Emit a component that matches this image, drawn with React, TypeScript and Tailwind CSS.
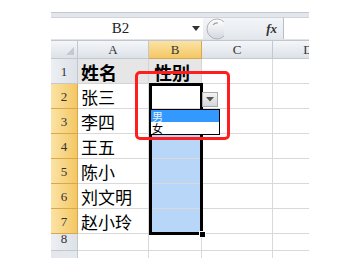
import React from 'react';

const cjk = { fontFamily: '"Noto Sans CJK SC", "Noto Sans", sans-serif' };
const serif = { fontFamily: '"Liberation Serif", "DejaVu Serif", serif' };

const names = ['张三', '李四', '王五', '陈小', '刘文明', '赵小玲'];

const HeaderCell: React.FC<{ label: string; w: string; active?: boolean }> = ({ label, w, active }) => (
  <div
    className={`${w} shrink-0 h-full flex items-center justify-center border-r border-b text-[13px] text-[#333] ${
      active
        ? 'bg-linear-to-b from-[#fbe3a4] to-[#f4c763] border-[#d9a84a]'
        : 'bg-linear-to-b from-[#f4f6f9] to-[#dde2e8] border-[#c3c8cf]'
    }`}
    style={serif}
  >
    {label}
  </div>
);

const RowHead: React.FC<{ n: number; active?: boolean; h: string }> = ({ n, active, h }) => (
  <div
    className={`w-[27px] shrink-0 ${h} flex items-end justify-center pb-[2px] border-r border-b text-[13px] text-[#333] ${
      active
        ? 'bg-linear-to-r from-[#fbe3a4] to-[#f4c763] border-[#d9a84a]'
        : 'bg-linear-to-r from-[#eceff3] to-[#dde2e8] border-[#c3c8cf]'
    }`}
    style={serif}
  >
    {n}
  </div>
);

// plain cells for columns C and D
const Rest: React.FC = () => (
  <>
    <div className="w-[71px] shrink-0 h-full border-r border-b border-[#d9d9d9]" />
    <div className="w-[71px] shrink-0 h-full border-r border-b border-[#d9d9d9]" />
  </>
);

export default function App() {
  return (
    <div className="relative w-[361px] h-[258px] bg-white overflow-hidden">
      <div className="ml-[51px] w-[258px] pt-[12px] overflow-hidden">
        {/* formula bar */}
        <div className="h-[5px] bg-[#e3e6eb] border-t border-[#c2c7ce]" />
        <div className="h-[22px] flex border-t border-[#d0d4da]">
          <div className="w-[152px] bg-white flex items-center">
            <span className="w-[139px] text-center text-[15px] text-[#222]" style={serif}>B2</span>
            <svg width="9" height="6" viewBox="0 0 9 6" className="ml-[2px]">
              <polygon points="0,0 8,0 4,5" fill="#333" />
            </svg>
          </div>
          <div className="w-[80px] flex items-center bg-linear-to-b from-[#f3f5f8] to-[#e4e8ed]">
            <svg width="20" height="22" viewBox="0 0 20 22" className="ml-[1px]">
              <defs>
                <linearGradient id="cg" x1="0" y1="0" x2="0" y2="1">
                  <stop offset="0" stopColor="#ffffff" />
                  <stop offset="1" stopColor="#d3d8de" />
                </linearGradient>
              </defs>
              <circle cx="13" cy="11" r="10" fill="url(#cg)" stroke="#aeb4bb" />
              <path d="M9 7 Q11 4.5 14 5" stroke="#9aa0a8" strokeWidth="1.2" fill="none" />
            </svg>
            <span className="ml-auto mr-[6px] text-[13px] italic font-bold text-[#333]" style={serif}>fx</span>
          </div>
          <div className="flex-1 bg-white border-l border-[#b8bec6]" />
        </div>
        <div className="h-[2px] bg-[#dfe3e8] border-b border-[#c2c7ce]" />

        {/* header row */}
        <div className="h-[18px] flex">
          <div className="w-[27px] shrink-0 h-full flex items-end justify-end pr-[3px] pb-[3px] border-r border-b border-[#c3c8cf] bg-linear-to-b from-[#f4f6f9] to-[#dde2e8]">
            <svg width="8" height="8" viewBox="0 0 8 8">
              <polygon points="8,0 8,8 0,8" fill="#c4c9cf" />
            </svg>
          </div>
          <HeaderCell label="A" w="w-[71px]" />
          <HeaderCell label="B" w="w-[53px]" active />
          <HeaderCell label="C" w="w-[71px]" />
          <HeaderCell label="D" w="w-[71px]" />
        </div>

        {/* row 1 */}
        <div className="h-[25px] flex">
          <RowHead n={1} h="h-[25px]" />
          <div className="w-[71px] shrink-0 h-full bg-[#e6e6e6] border-r border-b border-[#d4d4d4] flex items-end pl-[3px] text-[18px] leading-[22px] font-bold text-black" style={cjk}>
            姓名
          </div>
          <div className="w-[53px] shrink-0 h-full bg-[#e6e6e6] border-r border-b border-[#d4d4d4] flex items-end pl-[5px] text-[18px] leading-[22px] font-bold text-black" style={cjk}>
            性别
          </div>
          <Rest />
        </div>

        {/* data rows */}
        {names.map((n, i) => (
          <div key={n} className="h-[25px] flex">
            <RowHead n={i + 2} h="h-[25px]" active />
            <div className="w-[71px] shrink-0 h-full border-r border-b border-[#d9d9d9] flex items-end pl-[3px] text-[17px] leading-[22px] text-black" style={cjk}>
              {n}
            </div>
            <div className={`w-[53px] shrink-0 h-full border-r border-b border-[#d9d9d9] ${i === 0 ? 'bg-white' : 'bg-[#b8d6f7]'}`} />
            <Rest />
          </div>
        ))}

        {/* row 8 */}
        <div className="h-[17px] flex">
          <RowHead n={8} h="h-[17px]" />
          <div className="w-[71px] shrink-0 h-full border-r border-b border-[#d9d9d9]" />
          <div className="w-[53px] shrink-0 h-full border-r border-b border-[#d9d9d9]" />
          <Rest />
        </div>
        <div className="h-[10px] flex">
          <div className="w-[27px] shrink-0 h-full border-r border-[#c3c8cf] bg-[#e4e8ed]" />
          <div className="w-[71px] shrink-0 h-full border-r border-[#d9d9d9]" />
          <div className="w-[53px] shrink-0 h-full border-r border-[#d9d9d9]" />
          <div className="w-[71px] shrink-0 h-full border-r border-[#d9d9d9]" />
        </div>
      </div>

      {/* selection border B2:B7 */}
      <div className="absolute left-[149px] top-[83px] w-[54px] h-[152px] border-[3px] border-black" />
      <div className="absolute left-[199px] top-[231px] w-[7px] h-[7px] bg-black border border-white" />

      {/* dropdown button */}
      <div className="absolute left-[202px] top-[92px] w-[16px] h-[15px] flex items-center justify-center border border-[#a7abb0] bg-linear-to-b from-[#f2f2f2] to-[#d6d8db]">
        <svg width="8" height="5" viewBox="0 0 8 5">
          <polygon points="0,0 8,0 4,4.5" fill="#555" />
        </svg>
      </div>

      {/* dropdown list */}
      <div className="absolute left-[150px] top-[109px] w-[70px] h-[26px] bg-white border border-black overflow-hidden" style={cjk}>
        <div className="h-[12px] bg-[#3399ff] text-[#e6f2ff] text-[11px] leading-[12px] pl-[1px]">男</div>
        <div className="h-[12px] text-black text-[11px] leading-[12px] pl-[1px]">女</div>
      </div>

      {/* red annotation */}
      <div className="absolute left-[135px] top-[71px] w-[95px] h-[69px] border-[3px] border-[#ff1e1e] rounded-[5px]" />
    </div>
  );
}
